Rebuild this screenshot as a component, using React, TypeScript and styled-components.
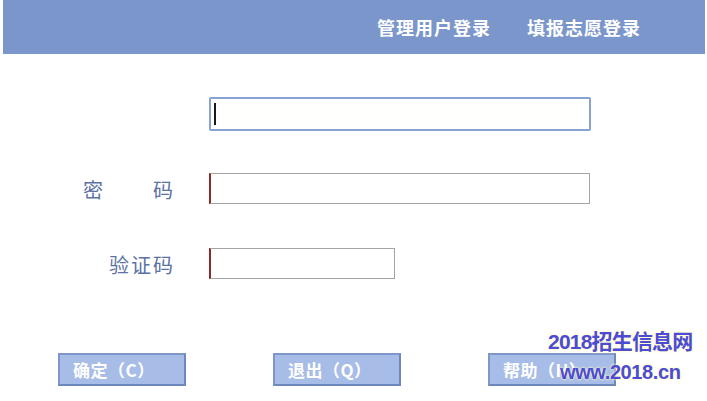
import React from "react";
import styled, { createGlobalStyle } from "styled-components";

const Global = createGlobalStyle`
  html, body { margin: 0; padding: 0; background: #ffffff; }
  body { font-family: "Noto Sans CJK SC", "Liberation Sans", sans-serif; }
  * { box-sizing: border-box; }
`;

const Page = styled.div`
  position: relative;
  width: 707px;
  height: 401px;
  overflow: hidden;
  background: #fff;
`;

const Header = styled.header`
  margin: 0 2px 0 3px;
  height: 54px;
  background: #7b96cb;
  display: flex;
  justify-content: flex-end;
  align-items: center;
  gap: 36px;
  padding-right: 64px;
`;

const NavLink = styled.a`
  color: #ffffff;
  font-family: "Noto Sans CJK SC", sans-serif;
  font-weight: 700;
  font-size: 18px;
  letter-spacing: 1px;
  text-decoration: none;
  cursor: pointer;
`;

const Form = styled.div`
  display: flex;
  flex-direction: column;
  gap: 43px;
  padding-top: 43px;
`;

const Row = styled.div`
  display: grid;
  grid-template-columns: 173px 1fr;
  column-gap: 36px;
  align-items: center;
  height: 32px;
`;

const Label = styled.div<{ $spread?: boolean }>`
  justify-self: end;
  display: flex;
  justify-content: ${(p) => (p.$spread ? "space-between" : "flex-end")};
  width: ${(p) => (p.$spread ? "90px" : "auto")};
  color: #5b72a4;
  font-family: "Noto Sans CJK SC", sans-serif;
  font-size: 20px;
  letter-spacing: ${(p) => (p.$spread ? "0" : "2px")};
  margin-right: ${(p) => (p.$spread ? "0" : "-2px")};
  padding-top: 3px;
`;

const Field = styled.div`
  position: relative;
  display: flex;
  align-items: center;
`;

const Input = styled.input<{ $w: number; $focus?: boolean }>`
  width: ${(p) => p.$w}px;
  height: ${(p) => (p.$focus ? 34 : 31)}px;
  border: ${(p) => (p.$focus ? "2px solid #87a2d3" : "1px solid #a4a4a4")};
  border-left: ${(p) => (p.$focus ? "2px solid #87a2d3" : "2px solid #8a2a2a")};
  border-radius: ${(p) => (p.$focus ? "2px" : "0")};
  background: ${(p) => (p.$focus ? "#fffffd" : "#ffffff")};
  outline: none;
  padding: 0 4px;
  font-size: 16px;
`;

const Caret = styled.span`
  position: absolute;
  left: 5px;
  top: 6px;
  width: 2px;
  height: 22px;
  background: #1a1a1a;
`;

const Buttons = styled.div`
  display: flex;
  gap: 87px;
  padding-left: 58px;
  margin-top: 74px;
`;

const Button = styled.button`
  width: 128px;
  height: 33px;
  background: #a7bde8;
  border: 2px solid #6e87bd;
  border-top-color: #7f97c8;
  border-left-color: #7f97c8;
  color: #ffffff;
  font-family: "Noto Sans CJK SC", sans-serif;
  font-weight: 700;
  font-size: 17px;
  text-align: left;
  padding: 0 0 0 13px;
  letter-spacing: 0.5px;
  cursor: pointer;
`;

const Watermark = styled.div`
  position: absolute;
  left: 548px;
  top: 331px;
  display: flex;
  flex-direction: column;
  align-items: flex-start;
  color: #4b4bd6;
  font-family: "Liberation Sans", "Noto Sans CJK SC", sans-serif;
  font-weight: 700;
  white-space: nowrap;
  text-shadow: 0 0 2px #fffbd0, 0 0 3px #fff7b0;
  line-height: 1;
  pointer-events: none;
`;

const WmTitle = styled.div`
  font-size: 21px;
  letter-spacing: -0.8px;
`;

const WmUrl = styled.div`
  font-size: 20px;
  margin-top: 10px;
  margin-left: 12px;
  letter-spacing: -0.4px;
`;

export default function App() {
  return (
    <Page>
      <Global />
      <Header>
        <NavLink>管理用户登录</NavLink>
        <NavLink>填报志愿登录</NavLink>
      </Header>
      <Form>
        <Row>
          <Label />
          <Field>
            <Input $w={382} $focus />
            <Caret />
          </Field>
        </Row>
        <Row>
          <Label $spread>
            <span>密</span>
            <span>码</span>
          </Label>
          <Field>
            <Input $w={381} type="password" />
          </Field>
        </Row>
        <Row>
          <Label>验证码</Label>
          <Field>
            <Input $w={186} />
          </Field>
        </Row>
      </Form>
      <Buttons>
        <Button>确定（C）</Button>
        <Button>退出（Q）</Button>
        <Button>帮助（H）</Button>
      </Buttons>
      <Watermark>
        <WmTitle>2018招生信息网</WmTitle>
        <WmUrl>www.2018.cn</WmUrl>
      </Watermark>
    </Page>
  );
}
